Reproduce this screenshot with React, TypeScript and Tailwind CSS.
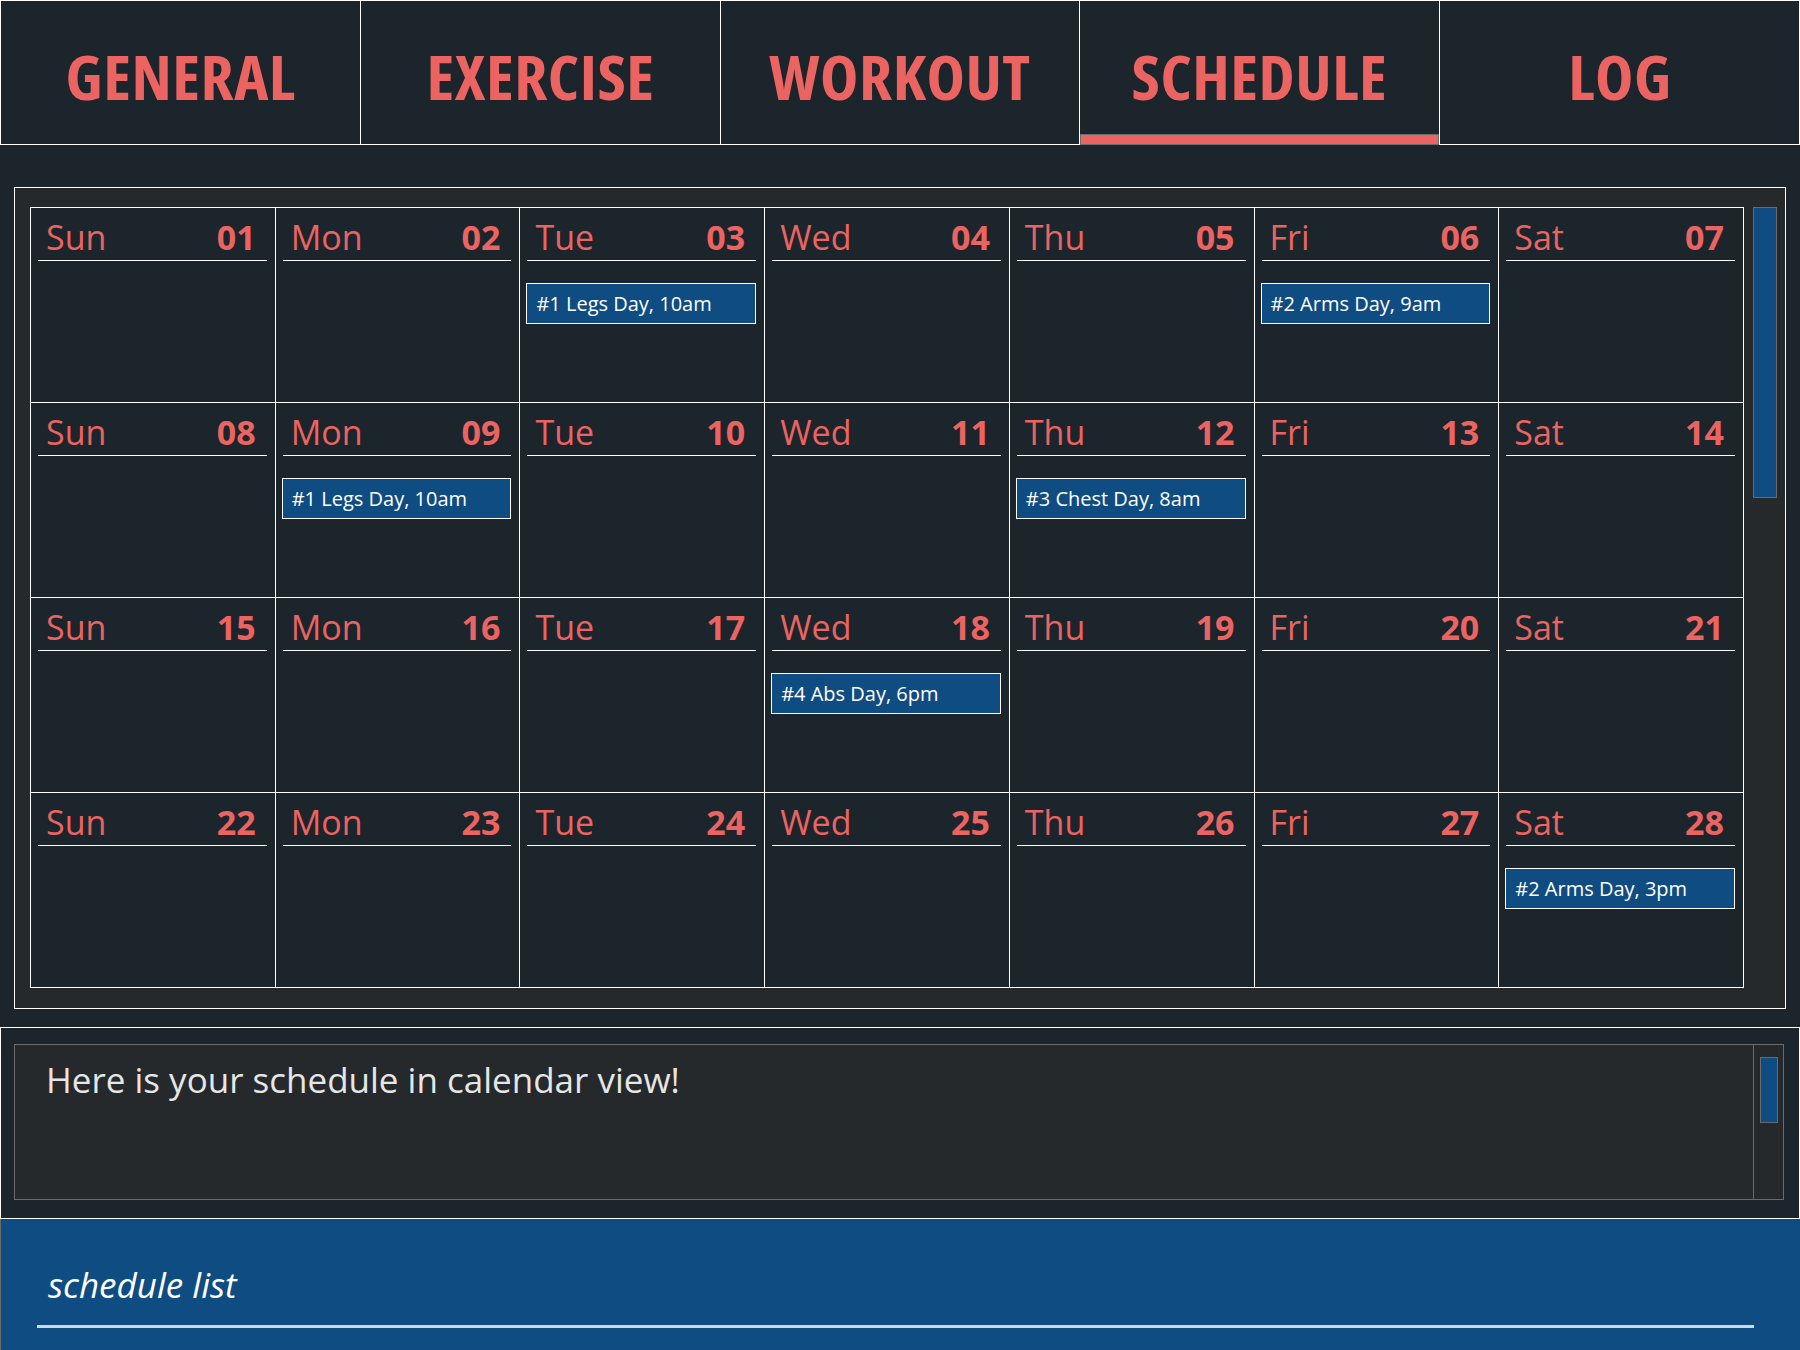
import clsx from "clsx";

const tabs = ["GENERAL", "EXERCISE", "WORKOUT", "SCHEDULE", "LOG"];
const activeTab = "SCHEDULE";

const dayNames = ["Sun", "Mon", "Tue", "Wed", "Thu", "Fri", "Sat"];

// events keyed by day of month
const events: { [day: number]: string } = {
    3: "#1 Legs Day, 10am",
    6: "#2 Arms Day, 9am",
    9: "#1 Legs Day, 10am",
    12: "#3 Chest Day, 8am",
    18: "#4 Abs Day, 6pm",
    28: "#2 Arms Day, 3pm",
};

function Tab({ label }: { label: string }) {
    const active = label === activeTab;
    return (
        <div className={clsx("relative flex-1 flex items-center justify-center pt-[8px] border-r border-b border-white")}>
            <span className="inline-block text-[60px] leading-none font-bold font-stretch-condensed scale-x-[1.08] text-[#ec6461] tracking-[0.5px]">{label}</span>
            {active && <div className="absolute left-0 right-0 bottom-[-1px] h-[11px] bg-[#ec6461] border border-[#6b6b6b]" />}
        </div>
    );
}

function DayCell({ day }: { day: number }) {
    const name = dayNames[(day - 1) % 7];
    const ev = events[day];
    return (
        <div className="h-[195px] border-r border-b border-white bg-[#1d252c] flex flex-col">
            <div className="mt-[6px] ml-[7px] mr-[8px] pl-[8px] pr-[11px] border-b border-white flex items-baseline justify-between text-[34px] leading-[46px] text-[#ec6461]">
                <span>{name}</span>
                <span className="font-bold">{String(day).padStart(2, "0")}</span>
            </div>
            {ev && (
                <div className="mt-[22px] ml-[6px] mr-[8px] h-[41px] border border-white bg-[#0f4c81] pl-[9px] flex items-center text-[20px] text-white">
                    {ev}
                </div>
            )}
        </div>
    );
}

export default function App() {
    const days = Array.from({ length: 28 }, (_, i) => i + 1);

    return (
        <div className="w-[1800px] h-[1350px] bg-[#1d252c] flex flex-col font-['Open_Sans',sans-serif] overflow-hidden">
            <div className="h-[145px] flex border-t border-l border-white shrink-0">
                {tabs.map((t) => <Tab key={t} label={t} />)}
            </div>

            <div className="mt-[42px] mx-[14px] h-[822px] border border-white bg-[#25292c] flex items-start pt-[19px] pl-[15px] pr-[8px] shrink-0">
                <div className="w-[1714px] grid grid-cols-7 border-l border-t border-white">
                    {days.map((d) => <DayCell key={d} day={d} />)}
                </div>
                <div className="ml-[9px] w-[24px] h-[291px] bg-[#0f4c81] border border-[#6b6b6b]" />
            </div>

            <div className="mt-[18px] h-[192px] border border-white flex pt-[16px] pl-[13px] pr-[15px] pb-[18px] shrink-0">
                <div className="flex-1 flex border border-[#6b6b6b] bg-[#25292c]">
                    <div className="flex-1 pl-[31px] pt-[12px] text-[35px] leading-[46px] text-[#e6e6e6]">
                        Here is your schedule in calendar view!
                    </div>
                    <div className="w-[30px] border-l border-[#6b6b6b] pt-[12px] pl-[6px]">
                        <div className="w-[18px] h-[66px] bg-[#0f4c81] border border-[#6b6b6b]" />
                    </div>
                </div>
            </div>

            <div className="flex-1 bg-[#0f4c81] border-l border-[#6b6b6b] flex flex-col pl-[36px] pr-[46px]">
                <div className="mt-[42px] pl-[11px] text-[35px] leading-[47px] italic text-white">schedule list</div>
                <div className="mt-[17px] h-[3px] bg-[#cfd9e3]" />
            </div>
        </div>
    );
}
